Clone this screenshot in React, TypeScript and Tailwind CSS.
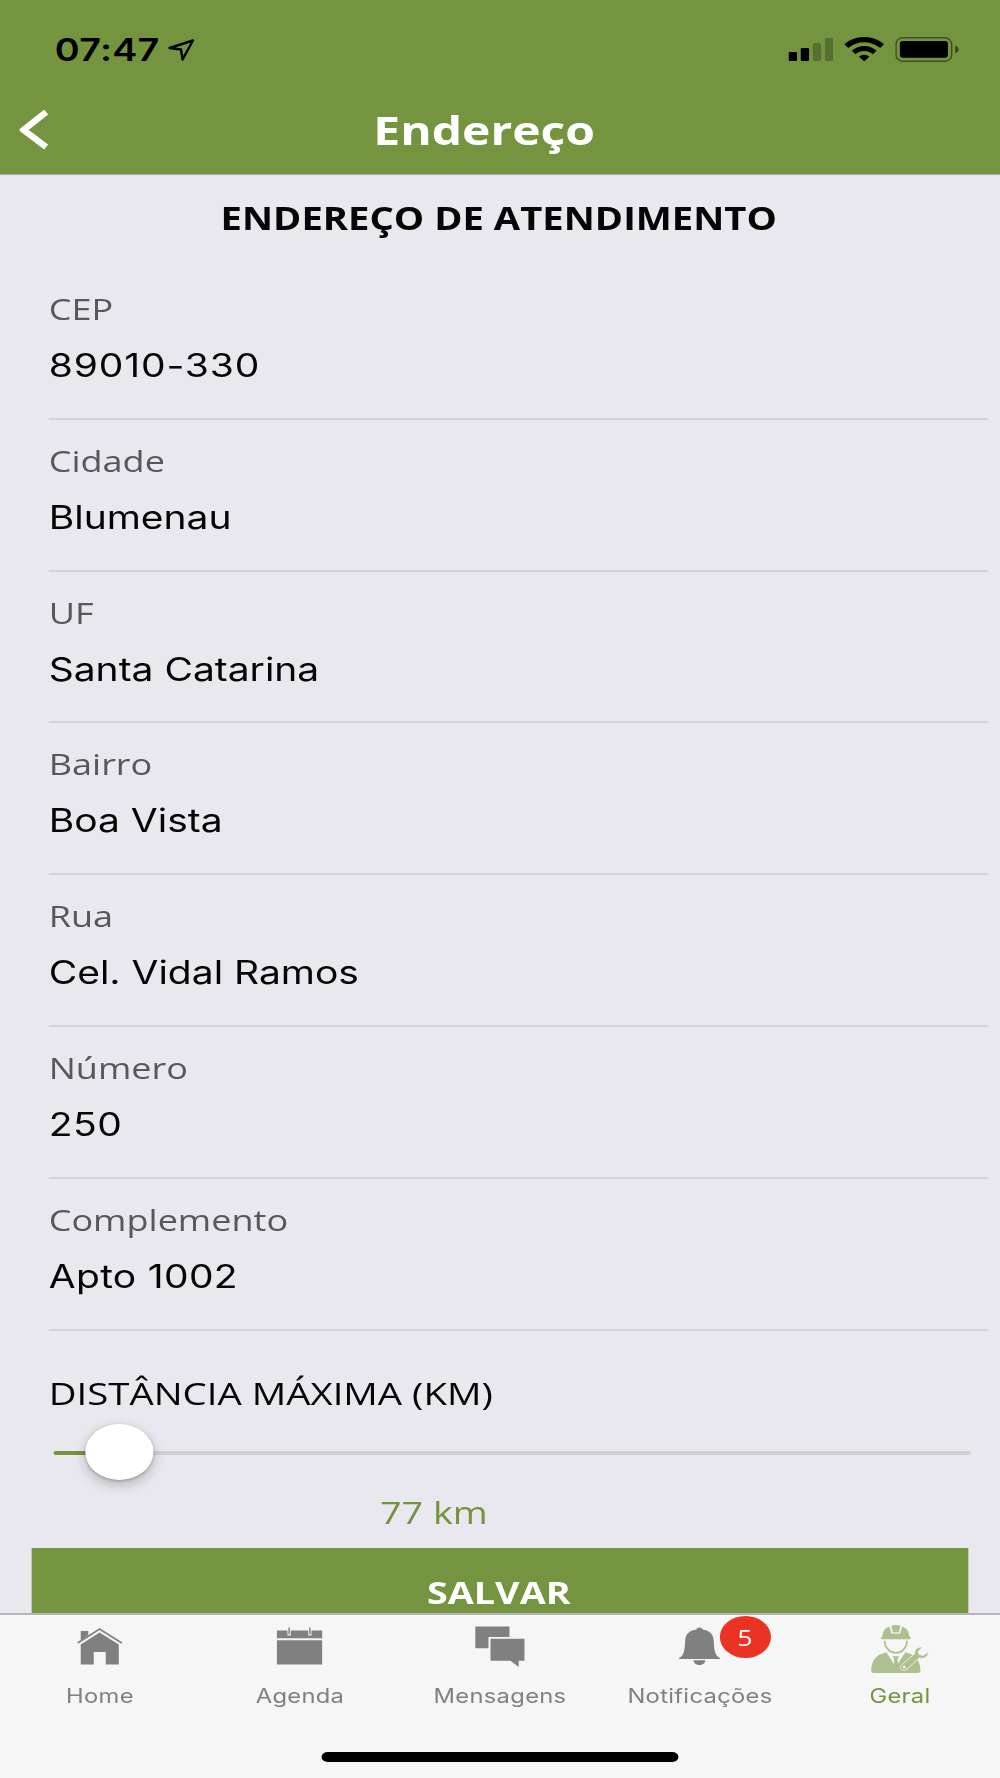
import type { ReactNode } from 'react';

const fields = [
  { label: 'CEP', value: '89010-330', spacing: 'tracking-[0.72px]' },
  { label: 'Cidade', value: 'Blumenau' },
  { label: 'UF', value: 'Santa Catarina' },
  { label: 'Bairro', value: 'Boa Vista' },
  { label: 'Rua', value: 'Cel. Vidal Ramos' },
  { label: 'Número', value: '250', spacing: 'tracking-[0.4px]' },
  { label: 'Complemento', value: 'Apto 1002', spacing: 'tracking-[0.27px]' },
];

function StatusIcons() {
  return (
    <div className="flex items-start gap-[9px]">
      <svg className="h-[26px] w-[37px]" viewBox="0 0 45 26" preserveAspectRatio="none">
        <rect x="0.7" y="15" width="8.3" height="9" rx="1.3" />
        <rect x="12.7" y="11" width="8.3" height="13" rx="1.3" />
        <rect x="24.8" y="6" width="8.3" height="18" rx="1.5" opacity="0.24" />
        <rect x="36.8" y="1" width="8.3" height="23" rx="1.5" opacity="0.24" />
      </svg>
      <svg className="h-[26px] w-[33px]" viewBox="0 0 40 26" preserveAspectRatio="none">
        <path d="M0.3 7.2C11.5-2.3 28.5-2.3 39.7 7.2L35.8 10.9C26.8 3.2 13.2 3.2 4.2 10.9Z" />
        <path d="M7.6 13.8C14.8 7.4 25.2 7.4 32.4 13.8L28.6 17.2C23.6 12.8 16.4 12.8 11.4 17.2Z" />
        <path d="M14.8 19.8C17.9 16.9 22.1 16.9 25.2 19.8L20 24.2Z" />
      </svg>
      <svg className="h-[26px] w-[53px]" viewBox="0 0 65 26" preserveAspectRatio="none">
        <rect x="0.8" y="0.8" width="56" height="23.4" rx="6.5" fill="none" stroke="black" strokeOpacity="0.45" strokeWidth="1.5" />
        <rect x="4.7" y="4" width="48.3" height="16.8" rx="2.8" />
        <path d="M60.3 8.8C65 9.8 65 15.2 60.3 16.2Z" opacity="0.5" />
      </svg>
    </div>
  );
}

function HomeIcon() {
  return (
    <svg className="h-[40px] w-[37.8px]" viewBox="0 0 46 40" preserveAspectRatio="none" fill="currentColor">
      <path d="M4 4h7.5v4.3L4 13.4Z" />
      <path d="M1 16L22.8 2 45 16" fill="none" stroke="currentColor" strokeWidth="1.8" />
      <path d="M4 17.6L22.8 5.6 42 17.6V37.5H29V25H17v12.5H4Z" />
    </svg>
  );
}

function CalendarIcon() {
  return (
    <svg className="h-[40px] w-[37.8px]" viewBox="0 0 46 40" preserveAspectRatio="none" fill="currentColor">
      <path d="M0.3 3.5H11V8.5H14.3V3.5H31.7V8.5H35V3.5H45.7V11.3H0.3Z" />
      <path d="M11.9 0.5h1.5v6.8h-1.5ZM32.6 0.5h1.5v6.8h-1.5Z" />
      <path d="M0.3 13.2H45.7V37.5H0.3Z" />
    </svg>
  );
}

function MessagesIcon() {
  return (
    <svg className="mr-px h-[42px] w-[41px]" viewBox="0 0 50 42" preserveAspectRatio="none" fill="currentColor">
      <path d="M0.3 0.5H34.5V11H13.5V22.2H0.3Z" />
      <path d="M15.5 12.7H49.5V34.7H43.7V41L35.5 34.7H15.5Z" />
    </svg>
  );
}

function BellIcon() {
  return (
    <svg className="h-[40px] w-[34.5px]" viewBox="0 0 42 40" preserveAspectRatio="none" fill="currentColor">
      <path d="M18 2.6C18 -0.3 24 -0.3 24 2.6C30.5 3.3 34.7 6.8 35.2 13C35.9 22.5 35.5 27.5 41.5 31.2V32H0.5V31.2C6.5 27.5 6.1 22.5 6.8 13C7.3 6.8 11.5 3.3 18 2.6Z" />
      <path d="M15 33.2H27C26.5 39.5 15.5 39.5 15 33.2Z" />
    </svg>
  );
}

function WorkerIcon() {
  return (
    <svg className="mt-[5px] h-[49px] w-[47.6px] text-[#afc08f]" viewBox="0 0 58 49" preserveAspectRatio="none" fill="currentColor">
      <path d="M20.5 0.7C22.5 -0.2 27.5 -0.2 29.5 0.7L28.2 7.3H21.8Z" />
      <path d="M18.8 1.5L20.5 8.5H29.5L31.2 1.5C36.2 3 38.3 7 38.3 11.2C40 11.6 40.3 14 39 14.3H11C9.7 14 10 11.6 11.7 11.2C11.7 7 13.8 3 18.8 1.5Z" />
      <path d="M13.8 15.8C14.8 32 35.2 32 36.2 15.8" fill="none" stroke="currentColor" strokeWidth="1.8" />
      <path d="M15.5 27.2L23.3 39.5H26.7L34.5 27.2C43 29.5 49 32.5 49.7 45.5C49.7 47.2 48.5 48 47 48H3C1.5 48 0.3 47.2 0.3 45.5C1 32.5 7 29.5 15.5 27.2Z" />
      <path d="M21.8 31.2H28.2L26.6 34.2L27.2 40H22.8L23.4 34.2Z" />
      <path
        d="M30.5 40.2L43.7 28.8C43.3 24.5 47 21.3 51.8 22.2L47.5 26.2L48.5 29.8L53 30.2L57.3 26.7C58.3 31.2 53.5 34.5 48.5 33L36 44.2C32.5 47.2 27.2 43.5 30.5 40.2Z"
        stroke="#f6f6f6"
        strokeWidth="0.8"
      />
      <circle cx="33.3" cy="42.2" r="1.4" fill="#f6f6f6" />
    </svg>
  );
}

type TabProps = {
  label: string;
  icon: ReactNode;
  active?: boolean;
  badge?: number;
};

function Tab({ label, icon, active, badge }: TabProps) {
  return (
    <button
      className={`relative flex flex-1 flex-col items-center font-[Inter,sans-serif] ${
        active ? 'text-[#74943f]' : 'text-[#808080]'
      }`}
    >
      <span className="flex h-[63px] items-center">{icon}</span>
      <span className="mt-[3px] text-[19.5px] leading-[30px] tracking-[0.25px]">{label}</span>
      {badge && (
        <span
          className="absolute top-px left-[98px] flex h-[42px] w-[42px] items-center justify-center
            rounded-full bg-[#ea3323] font-['Open_Sans',sans-serif] text-[22px] text-white"
        >
          {badge}
        </span>
      )}
    </button>
  );
}

export default function App() {
  return (
    <div className="h-[1778px] w-[1000px] overflow-hidden bg-[#e9e8ee]">
      <div
        className="flex h-full w-[821px] origin-top-left scale-x-[1.218] flex-col
          font-['Open_Sans',sans-serif] text-[#050505]"
      >
        {/* Header */}
        <header className="h-[175px] shrink-0 border-b border-[#aaa9af] bg-[#74943f]">
          <div className="flex h-[87px] items-start justify-between pt-[37px] pr-[33px] pl-[45px] text-black">
            <div className="flex items-start gap-[7px] font-[Inter,sans-serif]">
              <span className="text-[31px] leading-[25px] font-semibold tracking-[0.2px]">07:47</span>
              <svg className="mt-[2px] h-[22px] w-[22px]" viewBox="0 0 27 22" preserveAspectRatio="none">
                <path
                  d="M1.5 9L25 1.5L14.6 20.5L13 10.5Z"
                  fill="none"
                  stroke="black"
                  strokeWidth="2.4"
                  strokeLinejoin="round"
                />
              </svg>
            </div>
            <StatusIcons />
          </div>
          <div className="grid h-[87px] grid-cols-[60px_1fr_86px] items-center">
            <button className="pb-[2px] pl-[16px]" aria-label="Voltar">
              <svg className="h-[40px] w-[24px]" viewBox="0 0 29 40" preserveAspectRatio="none">
                <path d="M26.5 2L4 20L26.5 37" fill="none" stroke="white" strokeWidth="6.3" />
              </svg>
            </button>
            <h1 className="text-center text-[39.4px] font-bold text-white">Endereço</h1>
          </div>
        </header>

        {/* Address form */}
        <main className="min-h-0 flex-1 overflow-hidden">
          <h2 className="h-[93px] pt-[22px] pr-[2px] text-center text-[31.4px] leading-[42px] font-bold">
            ENDEREÇO DE ATENDIMENTO
          </h2>
          <div className="pr-[10px] pl-[40px]">
            {fields.map((field) => (
              <div key={field.label} className="h-[151.8px] border-b-2 border-[#d3d2d7] pt-[16px]">
                <div className="text-[29.6px] leading-[50px] text-[#58585b]">{field.label}</div>
                <div className={`mt-[7px] font-[Inter,sans-serif] text-[32px] leading-[50px] ${field.spacing ?? ''}`}>
                  {field.value}
                </div>
              </div>
            ))}
          </div>

          {/* Distance slider */}
          <div className="h-[93px] pt-[37px] pl-[40px] text-[31.5px] leading-[50px]">DISTÂNCIA MÁXIMA (KM)</div>
          <div className="relative mr-[24px] ml-[44px] h-[56px] pt-[27px]">
            <div className="h-[4px] rounded-full bg-[#d0d0d1]">
              <div className="h-full w-[50px] rounded-full bg-[#74943f]" />
            </div>
            <div
              className="absolute top-0 left-[26px] size-[56px] rounded-full bg-white
                shadow-[0_5px_12px_rgba(0,0,0,0.22),0_1px_3px_rgba(0,0,0,0.25)]"
            />
          </div>
          <div className="h-[68px] pt-[7px] pl-[312px] text-[31px] leading-[50px] text-[#74943f]">77 km</div>
          <button className="mx-[26px] block h-[90px] w-[769px] bg-[#74943f] pr-[2px] text-[31px] font-bold text-white">
            SALVAR
          </button>
        </main>

        {/* Tab bar */}
        <nav className="flex h-[165px] shrink-0 flex-col border-t-2 border-[#b5b4b8] bg-[#f6f6f6]">
          <div className="flex">
            <Tab label="Home" icon={<HomeIcon />} />
            <Tab label="Agenda" icon={<CalendarIcon />} />
            <Tab label="Mensagens" icon={<MessagesIcon />} />
            <Tab label="Notificações" icon={<BellIcon />} badge={5} />
            <Tab label="Geral" icon={<WorkerIcon />} active />
          </div>
          <div className="mx-auto mt-auto mb-[16px] h-[10px] w-[293px] rounded-full bg-black" />
        </nav>
      </div>
    </div>
  );
}
